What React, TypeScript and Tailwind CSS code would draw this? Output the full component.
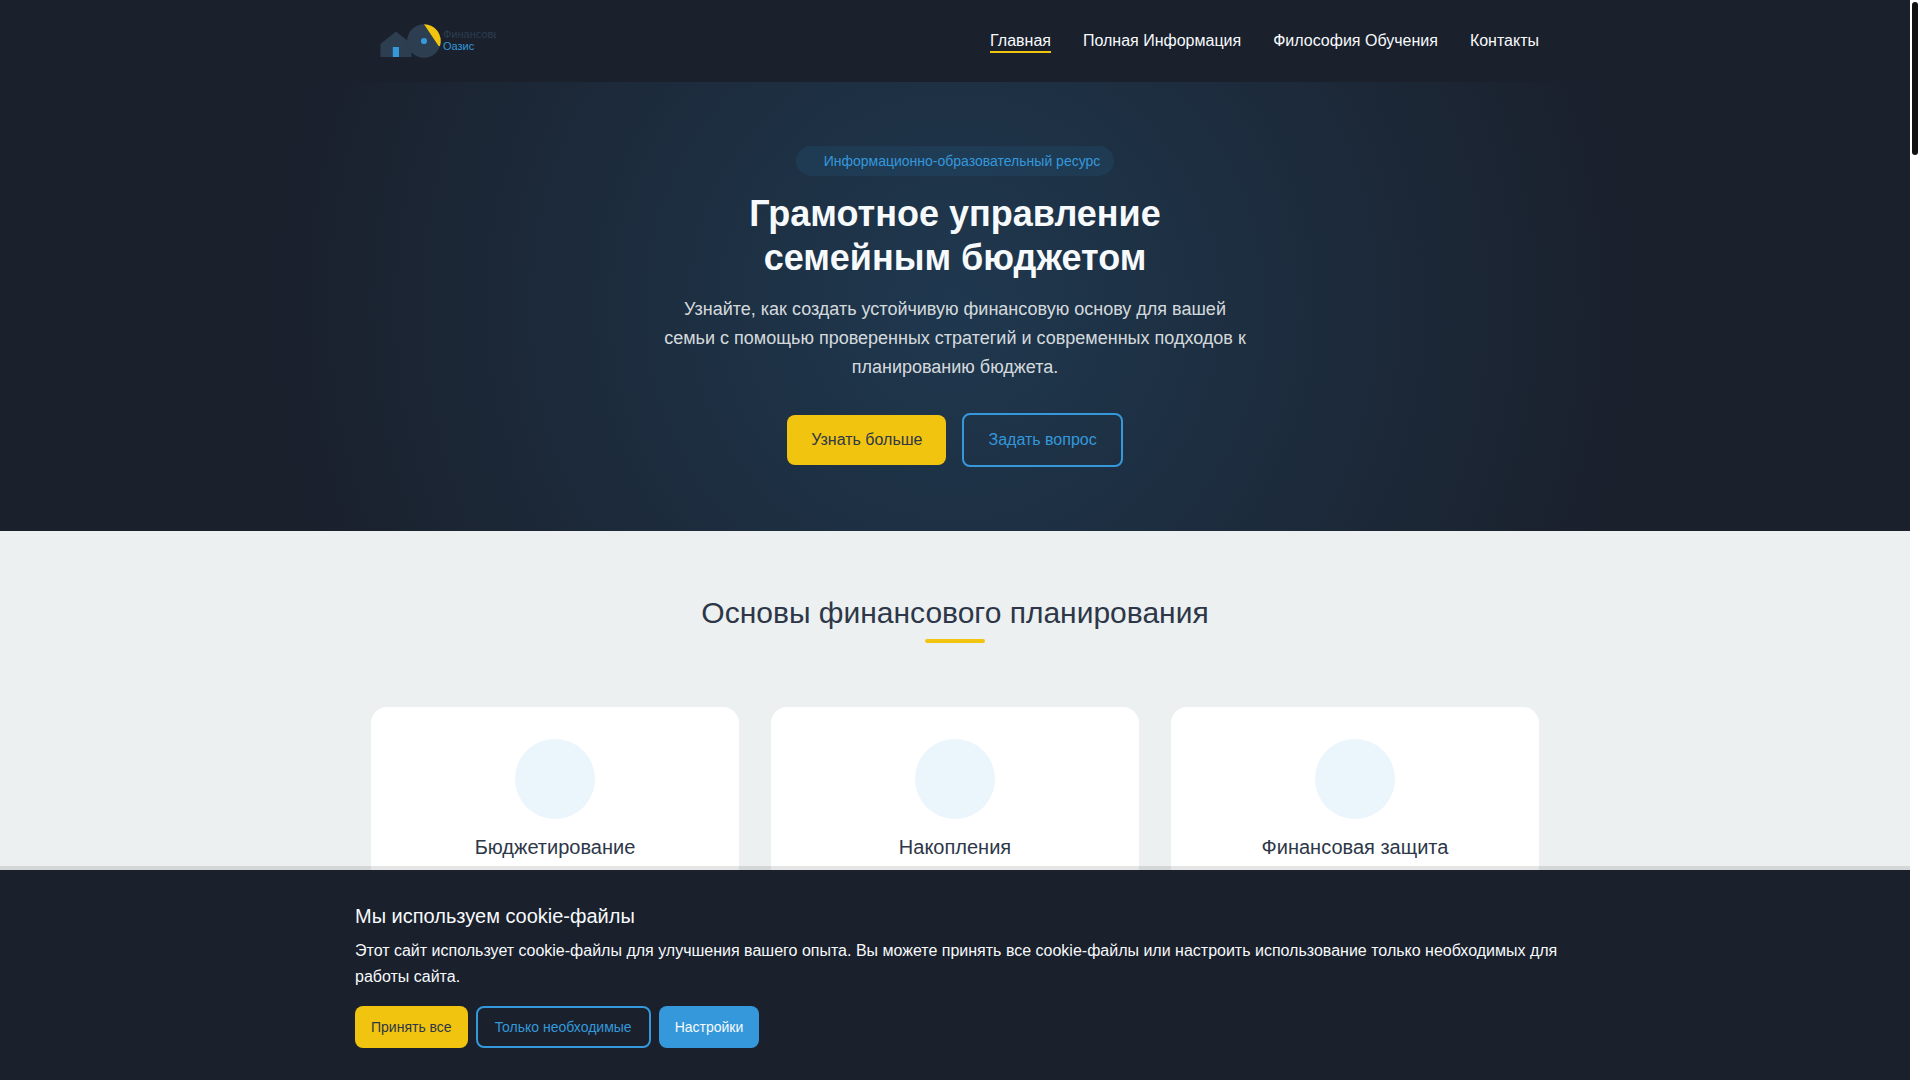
import clsx from 'clsx';

type NavItem = { label: string; href: string; active?: boolean };

const navItems: NavItem[] = [
  { label: 'Главная', href: '#home', active: true },
  { label: 'Полная Информация', href: '#info' },
  { label: 'Философия Обучения', href: '#philosophy' },
  { label: 'Контакты', href: '#contacts' },
];

const features = ['Бюджетирование', 'Накопления', 'Финансовая защита'];

const Logo = () => (
  <svg className="h-[50px] w-[125px]" viewBox="0 0 125 50" role="img" aria-label="Финансовый Оазис">
    <path d="M9.4 41V28.1L25 15.6L40.6 28.1V41Z" fill="#2c3e50" />
    <rect x="21.8" y="31" width="6.2" height="10" fill="#3498db" />
    <circle cx="53" cy="25" r="16.8" fill="#2c3e50" />
    <path d="M53 8.2A16.8 16.8 0 0 1 69 30L67.6 30Z" fill="#f1c40f" />
    <circle cx="53" cy="25" r="3.1" fill="#3498db" />
    <text x="72" y="21.5" fontSize="11" fill="#2c3e50">
      Финансовый
    </text>
    <text x="72" y="34" fontSize="11" fill="#3498db">
      Оазис
    </text>
  </svg>
);

const Header = () => (
  <header className="bg-[#1a202c]">
    <div className="mx-auto flex max-w-[1200px] items-center justify-between p-4">
      <a href="#home">
        <Logo />
      </a>
      <nav className="flex gap-8">
        {navItems.map((item) => (
          <a
            key={item.label}
            href={item.href}
            className={clsx(
              'border-b-2 pt-px leading-[21px] text-[#f7fafc]',
              item.active ? 'border-[#f1c40f]' : 'border-transparent',
            )}
          >
            {item.label}
          </a>
        ))}
      </nav>
    </div>
  </header>
);

const Hero = () => (
  <section className="bg-[#1a202c] bg-[radial-gradient(circle,rgba(52,152,219,0.2)_0%,transparent_70%)] px-4 py-16">
    <div className="mx-auto flex max-w-[590px] flex-col items-center text-center">
      <span className="rounded-2xl bg-[#3498db]/10 py-1 pr-3.5 pl-7 text-sm leading-[22px] text-[#3498db]">
        Информационно-образовательный ресурс
      </span>
      <h1 className="mt-4 max-w-[500px] text-4xl leading-[44px] font-bold text-[#f7fafc]">
        Грамотное управление семейным бюджетом
      </h1>
      <p className="mt-[15px] text-lg leading-[29px] text-[#ecf0f1]/90">
        Узнайте, как создать устойчивую финансовую основу для вашей семьи с помощью проверенных
        стратегий и современных подходов к планированию бюджета.
      </p>
      <div className="mt-[31px] flex items-center gap-4">
        <button type="button" className="rounded-lg bg-[#f1c40f] px-6 py-3 leading-[26px] text-[#2d3748]">
          Узнать больше
        </button>
        <button
          type="button"
          className="rounded-lg border-2 border-[#3498db] px-6 py-3 leading-[26px] text-[#3498db]"
        >
          Задать вопрос
        </button>
      </div>
    </div>
  </section>
);

const Features = () => (
  <section className="flex-1 bg-[#ecf0f1] py-16">
    <div className="mx-auto max-w-[1200px] px-4">
      <div className="flex flex-col items-center">
        <h2 className="text-3xl leading-[36px] text-[#2d3748]">Основы финансового планирования</h2>
        <div className="mt-2 h-1 w-[60px] rounded-xs bg-[#f1c40f]" />
      </div>
      <div className="mt-16 grid grid-cols-3 gap-8">
        {features.map((title) => (
          <article key={title} className="flex h-[320px] flex-col items-center rounded-2xl bg-white p-8">
            <div className="size-20 rounded-full bg-[#eaf5fc]" />
            <h3 className="mt-4 text-xl leading-[24px] text-[#2d3748]">{title}</h3>
          </article>
        ))}
      </div>
    </div>
  </section>
);

const CookieBanner = () => (
  <aside className="absolute inset-x-0 bottom-0 bg-[#1a202c] px-4 py-8 text-[#f7fafc] shadow-[0_-4px_0_rgba(0,0,0,0.1)]">
    <div className="mx-auto max-w-[1200px]">
      <h3 className="text-xl leading-[28px]">Мы используем cookie-файлы</h3>
      <p className="mt-2 -mr-4 leading-[26px]">
        Этот сайт использует cookie-файлы для улучшения вашего опыта. Вы можете принять все
        cookie-файлы или настроить использование только необходимых для работы сайта.
      </p>
      <div className="mt-4 flex gap-2 text-sm leading-[22px]">
        <button type="button" className="rounded-lg bg-[#f1c40f] px-4 text-[#2d3748]">
          Принять все
        </button>
        <button type="button" className="rounded-lg border-2 border-[#3498db] px-[17px] py-2 text-[#3498db]">
          Только необходимые
        </button>
        <button type="button" className="rounded-lg bg-[#3498db] px-4">
          Настройки
        </button>
      </div>
    </div>
  </aside>
);

const ScrollTrack = () => (
  <div className="w-[10px] bg-white p-[2px]" aria-hidden="true">
    <div className="h-[153px] rounded-full bg-[#111111]" />
  </div>
);

const App = () => {
  return (
    <div className="flex h-screen overflow-hidden font-['Liberation_Sans',Arial,sans-serif] text-base">
      <div className="relative flex flex-1 flex-col overflow-hidden">
        <Header />
        <Hero />
        <Features />
        <CookieBanner />
      </div>
      <ScrollTrack />
    </div>
  );
};

export default App;
